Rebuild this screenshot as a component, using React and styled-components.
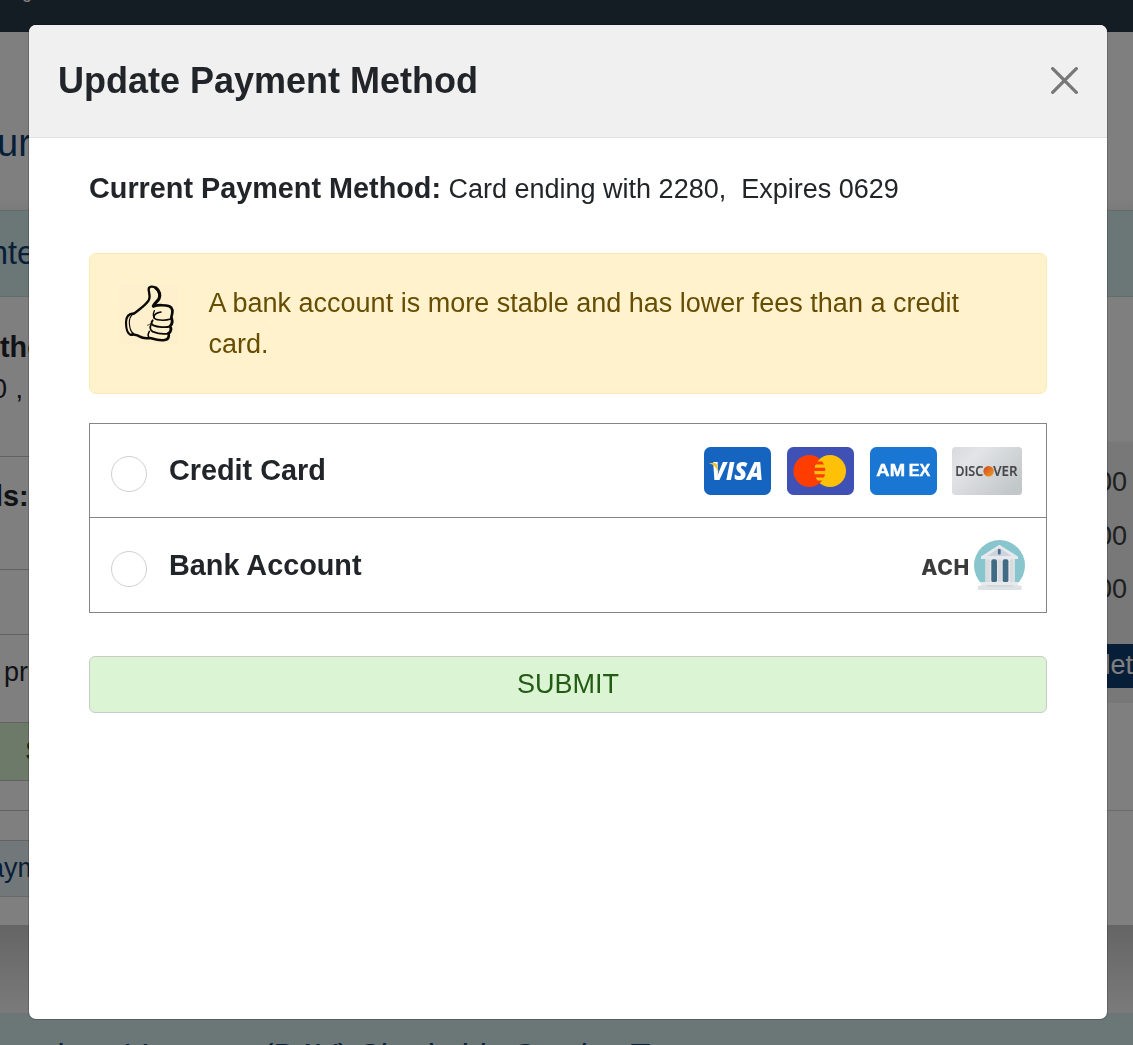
import React from 'react'
import styled, { createGlobalStyle } from 'styled-components'

const GlobalStyle = createGlobalStyle`
  * {
    box-sizing: border-box;
  }
  body {
    margin: 0;
    font-family: "Liberation Sans", Arial, sans-serif;
    font-size: 27px;
    line-height: 1.5;
    color: #212529;
    overflow: hidden;
  }
`

const ThumbIcon = () => (
  <svg width="60" height="60" viewBox="57 42 180 180" fill="none" stroke="#0b0904" strokeLinecap="round" strokeLinejoin="round">
    <rect x="57" y="42" width="180" height="180" fill="#feefcd" stroke="none" />
    <path d="M102 131C116 119 137 106 146 91C153 80 146 68 146 58C146 48 160 47 168 55C176 62 181 75 177 84" strokeWidth="7" />
    <path d="M168 54C179 62 182 76 177 86C172 95 163 99 160 108" strokeWidth="9.5" />
    <path d="M161 109C174 104 198 105 208 109C219 114 218 130 214 142" strokeWidth="8" />
    <path d="M183 126C170 128 162 134 162 142C163 151 194 153 212 147" strokeWidth="4.5" />
    <path d="M163 122C159 131 160 140 163 145" strokeWidth="4" />
    <path d="M213 143C220 151 217 164 210 169C198 174 172 171 160 166C153 162 153 157 158 151" strokeWidth="5.5" />
    <path d="M215 145C219 157 215 164 210 169C215 175 213 186 206 190" strokeWidth="8.5" />
    <path d="M153 164C149 172 151 181 158 185C173 191 194 193 207 190" strokeWidth="5.5" />
    <path d="M148 184C143 193 144 201 150 205" strokeWidth="4.5" />
    <path d="M206 191C208 201 203 208 194 210C179 213 164 208 150 204C134 206 127 205 120 200C113 194 106 194 98 193" strokeWidth="8" />
    <path d="M101 130C84 131 78 143 78 157C78 177 83 191 91 194C96 196 100 194 98 190" strokeWidth="6.5" />
    <path d="M101 131C91 137 87 147 88 160C89 174 92 184 99 190" strokeWidth="3.5" />
    <path d="M158 154C157 158 151 163 142 166" strokeWidth="2" />
  </svg>
)

const CloseIcon = () => (
  <svg width="27" height="27" viewBox="0 0 27 27" fill="none" stroke="#787878" strokeWidth="3.3" strokeLinecap="round">
    <path d="M1.7 1.7L25.3 25.3M25.3 1.7L1.7 25.3" />
  </svg>
)

const VisaIcon = () => (
  <svg width="67" height="48" viewBox="3 9 42 30">
    <rect x="3" y="9" width="42" height="30" rx="4" fill="#1565c0" />
    <text x="7.7" y="29.8" fontFamily="Open Sans, sans-serif" fontWeight="800" fontStyle="italic" fontSize="15" textLength="32.3" lengthAdjust="spacingAndGlyphs" fill="#fff">VISA</text>
    <path d="M6 19H9.6C10.6 19 11.1 19.6 11.3 20.4L12.2 24.9C10.8 21.9 9.1 20.1 6 19Z" fill="#f6c331" />
  </svg>
)

const MastercardIcon = () => (
  <svg width="67" height="48" viewBox="3 9 42 30">
    <rect x="3" y="9" width="42" height="30" rx="4" fill="#3f51b5" />
    <circle cx="30" cy="24" r="10" fill="#ffc107" />
    <path fill="#ff3d00" d="M22.014 30c-.464-.617-.863-1.284-1.176-2h5.325c.278-.636.496-1.304.637-2h-6.598C20.07 25.354 20 24.686 20 24h7c0-.686-.07-1.354-.201-2h-6.598c.142-.696.359-1.364.637-2h5.325c-.313-.716-.711-1.383-1.176-2h-2.973c.437-.58.93-1.122 1.481-1.595C21.747 14.909 19.481 14 17 14 11.477 14 7 18.477 7 24s4.477 10 10 10c3.269 0 6.162-1.575 7.986-4h-2.972z" />
  </svg>
)

const AmexIcon = () => (
  <svg width="67" height="48" viewBox="3 9 42 30">
    <rect x="3" y="9" width="42" height="30" rx="4" fill="#1976d2" />
    <g fontFamily="Liberation Sans, sans-serif" fontWeight="700" fontSize="10" fill="#fff" stroke="#fff" strokeWidth="0.25">
      <text x="7" y="27.3" textLength="18" lengthAdjust="spacingAndGlyphs">AM</text>
      <text x="27.3" y="27.3" textLength="13.5" lengthAdjust="spacingAndGlyphs">EX</text>
    </g>
  </svg>
)

const DiscoverIcon = () => (
  <svg width="70" height="48" viewBox="0 0 70 48">
    <defs>
      <linearGradient id="silver" x1="0" y1="0" x2="1" y2="0.7">
        <stop offset="0" stopColor="#d8dbdd" />
        <stop offset="0.3" stopColor="#e2e4e6" />
        <stop offset="1" stopColor="#c2c7ca" />
      </linearGradient>
      <linearGradient id="orange" x1="0" y1="0" x2="1" y2="1">
        <stop offset="0" stopColor="#c9471f" />
        <stop offset="1" stopColor="#f59a24" />
      </linearGradient>
    </defs>
    <rect width="70" height="48" rx="3.5" fill="url(#silver)" />
    <g fontFamily="Open Sans, sans-serif" fontWeight="600" fontSize="14.5" fill="#444648" stroke="#444648" strokeWidth="0.2">
      <text x="3.2" y="29.4" textLength="28" lengthAdjust="spacingAndGlyphs">DISC</text>
      <text x="41.3" y="29.4" textLength="24.2" lengthAdjust="spacingAndGlyphs">VER</text>
    </g>
    <circle cx="36.6" cy="24.2" r="5.2" fill="url(#orange)" />
  </svg>
)

const BankIcon = () => (
  <svg width="51" height="51" viewBox="0 0 51 51">
    <circle cx="25.5" cy="25.5" r="25.5" fill="#88c5cc" />
    <rect x="0" y="43" width="51" height="8" fill="#fff" />
    <rect x="11.3" y="18" width="29.5" height="25" fill="#e6e7e8" />
    <path d="M25.3 4.7L44 16.5V19H7V16.5Z" fill="#e6e9ee" />
    <path d="M25.3 7.5L37.5 16H13.5Z" fill="#cdd3da" />
    <rect x="23.9" y="9" width="2.8" height="5.5" rx="1" fill="#4b6f91" />
    <rect x="17.3" y="19.2" width="5.7" height="23" rx="2" fill="#416a84" />
    <rect x="28.7" y="19.2" width="5.7" height="23" rx="2" fill="#416a84" />
    <path d="M12 19.5H15.8V42H12ZM24 19.5H27.6V42H24ZM36 19.5H39.6V42H36Z" fill="#d9dcdf" />
    <path d="M7 42H44V46H7Z" fill="#e7e9eb" />
    <path d="M4 45.5H47.5V50H4Z" fill="#dfe2e5" />
    <path d="M12 45.3H39V46.4H12Z" fill="#cbd0d4" />
  </svg>
)

const App = () => {
  return (
    <>
      <GlobalStyle />

      <Page>
        <TopBar><span>g</span></TopBar>
        <PageHead><h1>ur</h1></PageHead>
        <Band><h2>nte</h2></Band>

        <Columns>
          <Main>
            <Block $height={160} $pad={29}>
              <Line $shift={0} $bold>the</Line>
              <Line $shift={-8}>0 ,</Line>
            </Block>
            <Block $height={113} $pad={18}>
              <Line $shift={-5} $bold>ls:</Line>
            </Block>
            <Block $height={65} $pad={0} />
            <Block $height={88} $pad={16}>
              <Line $shift={4}>pr</Line>
            </Block>
            <GreenBar>S</GreenBar>
            <Block $height={30} $pad={0} />
            <Block $height={30} $pad={0} />
            <BlueBar>aym</BlueBar>
          </Main>

          <Side>
            <Totals>
              <p>00</p>
              <p>00</p>
              <p>00</p>
              <div className="complete">let</div>
            </Totals>
            <Rule />
          </Side>
        </Columns>

        <Gap />
        <Bottom>American Veterans (DAV) Charitable Service Trust</Bottom>
      </Page>

      <Backdrop>
        <Modal>
          <ModalHeader>
            <h2>Update Payment Method</h2>
            <CloseIcon />
          </ModalHeader>

          <ModalBody>
            <Current>
              <strong>Current Payment Method:</strong> Card ending with 2280,&nbsp; Expires 0629
            </Current>

            <Notice>
              <ThumbIcon />
              <p>A bank account is more stable and has lower fees than a credit card.</p>
            </Notice>

            <Options>
              <Option>
                <Radio />
                <label>Credit Card</label>
                <Cards>
                  <VisaIcon />
                  <MastercardIcon />
                  <AmexIcon />
                  <DiscoverIcon />
                </Cards>
              </Option>
              <Option>
                <Radio />
                <label>Bank Account</label>
                <Ach>
                  <span>ACH</span>
                  <BankIcon />
                </Ach>
              </Option>
            </Options>

            <Submit>SUBMIT</Submit>
          </ModalBody>
        </Modal>
      </Backdrop>
    </>
  )
}

const Page = styled.div`
  height: 1045px;
  overflow: hidden;
  white-space: nowrap;
  background-color: #fff;
`

const TopBar = styled.div`
  height: 32px;
  padding-left: 22px;
  overflow: hidden;
  background-color: #2b3b49;
  color: #fff;
  font-size: 18px;
  line-height: 20px;
  span {
    display: block;
    margin-top: -18px;
  }
`

const PageHead = styled.div`
  height: 178px;
  padding-top: 84px;
  background: linear-gradient(#fff 94%, #f4f4f4);
  h1 {
    margin: 0 0 0 -3px;
    font-size: 38px;
    font-weight: 400;
    line-height: 54px;
    color: #123f70;
  }
`

const Band = styled.div`
  height: 87px;
  padding-top: 18px;
  background-color: #d7ecef;
  border-top: 1px solid #c9d6d8;
  border-bottom: 1px solid #c9d6d8;
  h2 {
    margin: 0 0 0 -10px;
    font-size: 32.4px;
    font-weight: 400;
    line-height: 48px;
    color: #123f70;
  }
`

const Columns = styled.div`
  display: flex;
  height: 628px;
`

const Main = styled.div`
  width: 560px;
`

const Block = styled.div`
  height: ${({ $height }) => $height}px;
  padding-top: ${({ $pad }) => $pad}px;
  border-bottom: 1px solid #c4c4c4;
`

const Line = styled.div`
  margin-left: ${({ $shift }) => $shift}px;
  font-size: ${({ $bold }) => ($bold ? '28.8px' : '27px')};
  font-weight: ${({ $bold }) => ($bold ? 700 : 400)};
  line-height: ${({ $bold }) => ($bold ? '42px' : '43px')};
  word-spacing: 1px;
`

const GreenBar = styled.div`
  height: 58px;
  padding-left: 25px;
  background-color: #daf4d4;
  border-bottom: 1px solid #bfc9bd;
  color: #235a14;
  font-size: 27px;
  line-height: 56px;
`

const BlueBar = styled.div`
  height: 56px;
  text-indent: -11px;
  background-color: #e4f0f5;
  border-bottom: 1px solid #ccd4d8;
  color: #123f70;
  line-height: 54px;
`

const Side = styled.div`
  flex: 1;
  padding-top: 144px;
`

const Totals = styled.div`
  height: 262px;
  padding-top: 13px;
  background-color: #f1f1f1;
  border-top: 1px solid #f8f8f8;
  p {
    margin: 0;
    padding-right: 6px;
    height: 53.5px;
    color: #3c3f42;
    line-height: 54px;
    text-align: right;
  }
  .complete {
    height: 44px;
    margin-top: 28px;
    padding-left: 546px;
    overflow: hidden;
    background-color: #0f3d72;
    color: #fff;
    line-height: 43px;
  }
`

const Rule = styled.div`
  height: 108px;
  border-bottom: 1px solid #d8d8d8;
`

const Gap = styled.div`
  height: 88px;
  background: linear-gradient(#cacaca, #f6f6f6);
`

const Bottom = styled.div`
  height: 60px;
  padding-top: 24px;
  text-indent: -20px;
  background-color: #d7ecef;
  color: #123f70;
  font-size: 32.4px;
  line-height: 38px;
`

const Backdrop = styled.div`
  position: fixed;
  inset: 0;
  padding: 24px 25px 0 28px;
  background-color: rgba(0, 0, 0, 0.5);
`

const Modal = styled.div`
  height: 996px;
  border: 1px solid rgba(0, 0, 0, 0.18);
  border-radius: 8px;
  background-color: #fff;
  background-clip: padding-box;
  overflow: hidden;
`

const ModalHeader = styled.div`
  display: flex;
  align-items: center;
  justify-content: space-between;
  height: 113px;
  padding: 0 29px;
  background-color: #f0f0f0;
  border-bottom: 1px solid #dee0e2;
  h2 {
    margin: 0;
    font-size: 36px;
    line-height: 54px;
  }
  svg {
    margin-bottom: 2px;
  }
`

const ModalBody = styled.div`
  padding: 29px 60px;
`

const Current = styled.div`
  height: 86px;
  line-height: 43px;
  strong {
    font-size: 28.8px;
  }
`

const Notice = styled.div`
  display: flex;
  align-items: flex-start;
  gap: 29.5px;
  height: 141px;
  padding: 29px;
  background-color: #fff2cd;
  border: 1px solid #fbeab8;
  border-radius: 7px;
  color: #664d03;
  svg {
    flex-shrink: 0;
    margin-top: 1px;
  }
  p {
    margin: 0;
    line-height: 40.5px;
  }
`

const Options = styled.div`
  margin-top: 29px;
  border: 1px solid #858585;
`

const Option = styled.div`
  display: flex;
  align-items: center;
  height: 93px;
  padding: 0 21px;
  & + & {
    border-top: 1px solid #858585;
    height: 95px;
  }
  label {
    flex: 1;
    margin-left: 22px;
    font-size: 28.8px;
    font-weight: 700;
    line-height: 43px;
  }
`

const Radio = styled.span`
  width: 36px;
  height: 36px;
  margin-top: 7px;
  border: 1px solid #cfcfcf;
  border-radius: 50%;
`

const Cards = styled.div`
  display: flex;
  align-items: center;
  padding-right: 3px;
  gap: 16px;
  svg:last-child {
    margin-left: -1px;
  }
`

const Ach = styled.div`
  display: flex;
  align-items: center;
  gap: 4px;
  span {
    margin-top: 6px;
    font-family: Inter, sans-serif;
    font-size: 21px;
    font-weight: 800;
    line-height: 30px;
    letter-spacing: 0.7px;
    color: #3b3b3b;
  }
`

const Submit = styled.button`
  display: block;
  width: 100%;
  height: 57px;
  margin-top: 43px;
  padding: 0 0 1px;
  background-color: #daf4d4;
  border: 1px solid #c7cdc6;
  border-radius: 6px;
  color: #235a14;
  font-family: inherit;
  font-size: 27px;
`

export default App
